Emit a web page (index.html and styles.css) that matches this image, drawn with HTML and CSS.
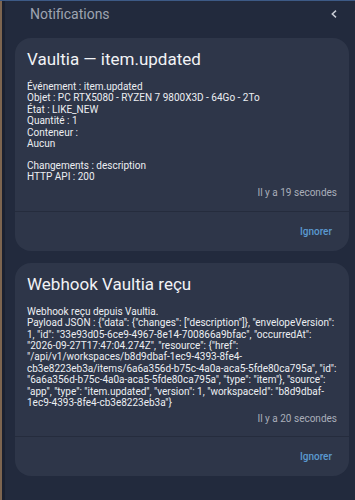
FILE: index.html
```html
<!DOCTYPE html>
<html lang="fr">
<head>
<meta charset="utf-8">
<link rel="stylesheet" href="styles.css">
</head>
<body>
<div class="frame">
  <div class="edge"></div>
  <div class="edge2"></div>
  <div class="panel">
    <header class="head">
      <span class="head-title">Notifications</span>
      <svg class="chev" width="6" height="8" viewBox="0 0 6 8"><path d="M5 0.6 L1.3 4 L5 7.4" fill="none" stroke="#c9cdd6" stroke-width="1.5"/></svg>
    </header>

    <section class="card">
      <div class="card-body">
        <h2 class="card-title">Vaultia — item.updated</h2>
        <div class="msg">
          <p>Événement : item.updated<br>Objet : PC RTX5080 - RYZEN 7 9800X3D - 64Go - 2To<br>État : LIKE_NEW<br>Quantité : 1<br>Conteneur :<br>Aucun</p>
          <p>Changements : description<br>HTTP API : 200</p>
        </div>
        <div class="time">Il y a 19 secondes</div>
      </div>
      <div class="actions"><span class="btn">Ignorer</span></div>
    </section>

    <section class="card">
      <div class="card-body">
        <h2 class="card-title">Webhook Vaultia reçu</h2>
        <div class="msg">
          <p>Webhook reçu depuis Vaultia.<br>Payload JSON : {"data": {"changes": ["description"]}, "envelopeVersion": 1, "id": "33e93d05-6ce9-4967-8e14-700866a9bfac", "occurredAt": "2026-09-27T17:47:04.274Z", "resource": {"href": "/api/v1/workspaces/b8d9dbaf-1ec9-4393-8fe4-cb3e8223eb3a/items/6a6a356d-b75c-4a0a-aca5-5fde80ca795a", "id": "6a6a356d-b75c-4a0a-aca5-5fde80ca795a", "type": "item"}, "source": "app", "type": "item.updated", "version": 1, "workspaceId": "b8d9dbaf-1ec9-4393-8fe4-cb3e8223eb3a"}</p>
        </div>
        <div class="time">Il y a 20 secondes</div>
      </div>
      <div class="actions"><span class="btn">Ignorer</span></div>
    </section>
  </div>
</div>
</body>
</html>
```

FILE: styles.css
```css
html, body {
  margin: 0;
  padding: 0;
  height: 100%;
  overflow: hidden;
}
body {
  background: #21283a;
  font-family: Roboto, "Noto Sans", sans-serif;
  border-top: 1px solid #3d5a86;
  box-sizing: border-box;
}
.frame {
  display: flex;
  height: 100%;
}
.edge {
  width: 2px;
  background: #7d6550;
  flex: none;
}
.edge2 {
  width: 3px;
  background: #1a2030;
  flex: none;
}
.panel {
  flex: 1;
  min-width: 0;
  background: #222a3d;
}
.head {
  height: 25px;
  display: flex;
  align-items: center;
  justify-content: space-between;
  padding: 0 18px 0 25px;
  margin-bottom: 12px;
}
.head-title {
  color: #9ea4b1;
  font-size: 14px;
}
.chev {
  display: block;
}
.card {
  background: #2e3649;
  border-radius: 16px;
  margin: 0 6px 12px 10px;
  overflow: hidden;
}
.card-body {
  padding: 10px 12px 10.5px 12px;
}
.card-title {
  margin: 0;
  font-weight: 400;
  font-size: 17px;
  line-height: 22px;
  color: #f1f2f5;
}
.msg {
  margin-top: 11px;
  color: #eceef2;
  font-size: 10px;
  line-height: 11.4px;
}
.msg p {
  margin: 0 0 10.5px;
}
.msg p:last-child {
  margin-bottom: 0;
}
.time {
  text-align: right;
  color: #a9aeb9;
  font-size: 10px;
  line-height: 14px;
  margin-top: 3.5px;
}
.actions {
  border-top: 1px solid #252c3d;
  height: 39px;
  display: flex;
  align-items: center;
  justify-content: flex-end;
  padding-right: 17px;
}
.btn {
  color: #5b9ad0;
  font-size: 10px;
  font-weight: 500;
}
```
